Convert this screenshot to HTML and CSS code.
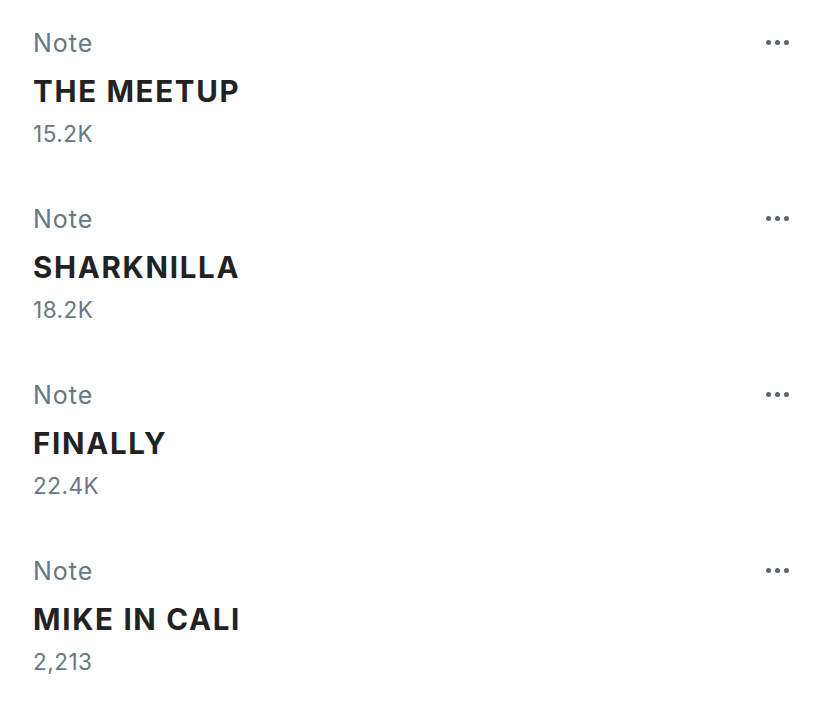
FILE: index.html
```html
<!DOCTYPE html>
<html lang="en">
<head>
  <meta charset="UTF-8" />
  <title>Notes</title>
  <link rel="stylesheet" href="styles.css">
</head>
<body>
  <ul class="notes">
    <li class="note">
      <div class="note-body">
        <div class="note-kind">Note</div>
        <div class="note-title">THE MEETUP</div>
        <div class="note-count">15.2K</div>
      </div>
      <button class="more" aria-label="More"><span></span><span></span><span></span></button>
    </li>
    <li class="note">
      <div class="note-body">
        <div class="note-kind">Note</div>
        <div class="note-title">SHARKNILLA</div>
        <div class="note-count">18.2K</div>
      </div>
      <button class="more" aria-label="More"><span></span><span></span><span></span></button>
    </li>
    <li class="note">
      <div class="note-body">
        <div class="note-kind">Note</div>
        <div class="note-title">FINALLY</div>
        <div class="note-count">22.4K</div>
      </div>
      <button class="more" aria-label="More"><span></span><span></span><span></span></button>
    </li>
    <li class="note">
      <div class="note-body">
        <div class="note-kind">Note</div>
        <div class="note-title">MIKE IN CALI</div>
        <div class="note-count">2,213</div>
      </div>
      <button class="more" aria-label="More"><span></span><span></span><span></span></button>
    </li>
  </ul>
</body>
</html>
```

FILE: styles.css
```css
body {
  margin: 0;
  background: #fff;
  font-family: Inter, "Liberation Sans", sans-serif;
}
.notes {
  list-style: none;
  margin: 0;
  padding: 26px 0 0 33px;
}
.note {
  display: flex;
  justify-content: space-between;
  align-items: flex-start;
  height: 176px;
}
.note-kind {
  font-size: 25px;
  line-height: 34px;
  letter-spacing: 1px;
  color: #687684;
}
.note-title {
  margin-top: 6px;
  font-size: 29.5px;
  line-height: 50px;
  font-weight: 700;
  color: #222;
  letter-spacing: 1.7px;
}
.note-count {
  margin-top: 3px;
  font-size: 22.5px;
  line-height: 30px;
  color: #687684;
  letter-spacing: 0.5px;
}
.more {
  display: flex;
  gap: 4px;
  border: none;
  background: none;
  padding: 0;
  margin: 14px 39px 0 0;
  cursor: pointer;
}
.more span {
  width: 5px;
  height: 5px;
  border-radius: 50%;
  background: #5b6670;
}
```
